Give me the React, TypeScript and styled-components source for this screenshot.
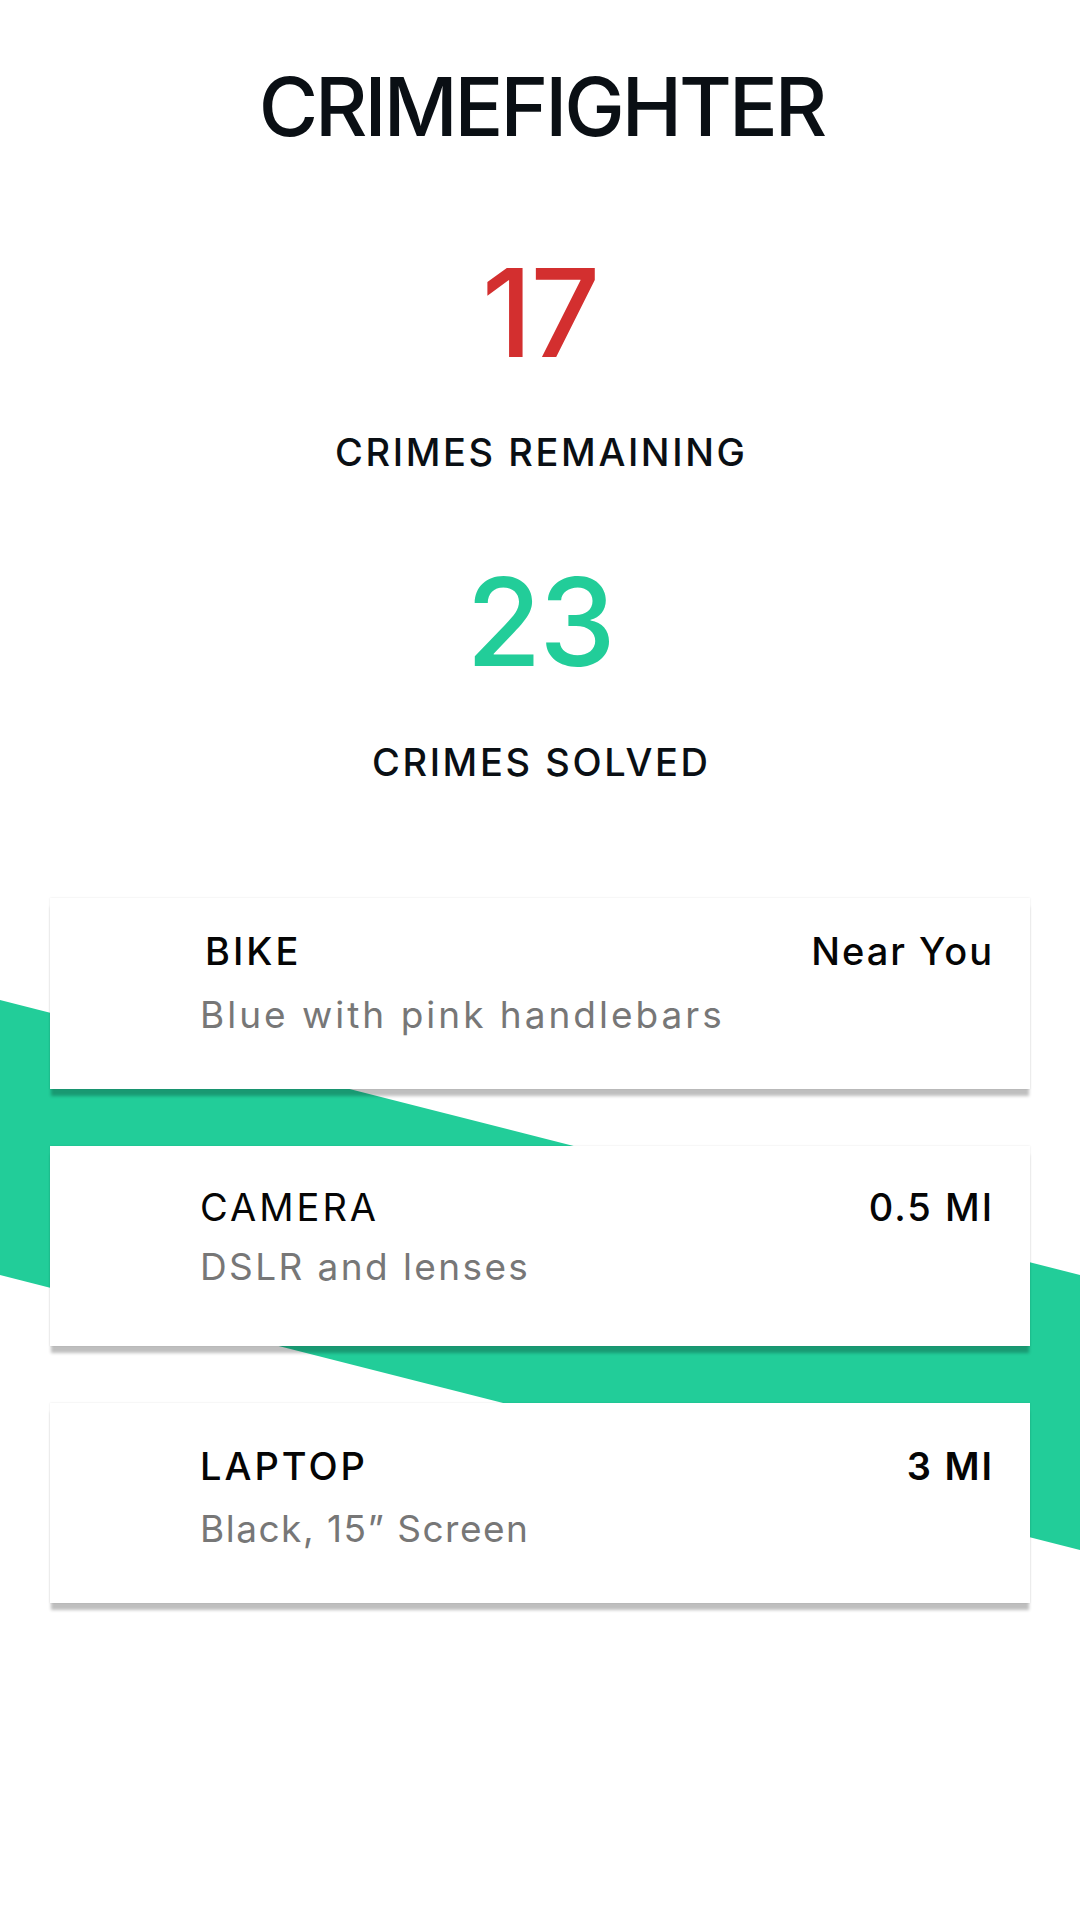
import React from "react";
import styled, { createGlobalStyle } from "styled-components";

const GlobalStyle = createGlobalStyle`
  html, body {
    margin: 0;
    padding: 0;
    background: #ffffff;
  }
  body {
    font-family: "Inter", "Noto Sans", "Liberation Sans", sans-serif;
    -webkit-font-smoothing: antialiased;
  }
`;

const Page = styled.main`
  width: 1080px;
  min-height: 1920px;
  display: flex;
  flex-direction: column;
  align-items: center;
  background: #ffffff;
  overflow: hidden;
`;

const Title = styled.h1`
  margin: 67px -3px 0 0;
  font-size: 81px;
  line-height: 1;
  font-weight: 500;
  letter-spacing: -3px;
  color: #0a0f14;
`;

const StatBlock = styled.section`
  display: flex;
  flex-direction: column;
  align-items: center;
  margin-top: ${(p: { $top: number }) => p.$top}px;
`;

const StatNumber = styled.div<{ $color: string }>`
  font-size: 122px;
  line-height: 1;
  font-weight: 500;
  letter-spacing: -2px;
  color: ${(p) => p.$color};
`;

const StatLabel = styled.div`
  margin-top: ${(p: { $gap: number }) => p.$gap}px;
  margin-right: -2.6px;
  font-size: 38px;
  line-height: 1;
  font-weight: 500;
  letter-spacing: 2.6px;
  color: #0a0f14;
`;

const ListArea = styled.section`
  position: relative;
  width: 1080px;
  margin-top: 117px;
  display: flex;
  flex-direction: column;
  align-items: center;
  gap: 57px;
`;

const Stripe = styled.svg`
  position: absolute;
  left: 0;
  top: 102px;
  width: 1080px;
  height: 560px;
  z-index: 0;
`;

const Card = styled.article<{ $height: number; $pad: number; $gap: number }>`
  position: relative;
  z-index: 1;
  box-sizing: border-box;
  width: 980px;
  height: ${(p) => p.$height}px;
  padding: ${(p) => p.$pad}px 38px 0 150px;
  background: #ffffff;
  display: flex;
  flex-direction: column;
  gap: ${(p) => p.$gap}px;
  box-shadow: 0 8px 3px -1px rgba(0, 0, 0, 0.25), 0 0 2px rgba(0, 0, 0, 0.1);
`;

const CardRow = styled.div`
  display: flex;
  justify-content: space-between;
  align-items: baseline;
`;

const ItemName = styled.span<{ $weight: number; $indent?: number }>`
  font-size: 38px;
  line-height: 1;
  font-weight: ${(p) => p.$weight};
  letter-spacing: 3px;
  color: #050505;
  padding-left: ${(p) => p.$indent ?? 0}px;
`;

const Distance = styled.span<{ $weight: number }>`
  font-size: 38px;
  line-height: 1;
  font-weight: ${(p) => p.$weight};
  letter-spacing: 2px;
  margin-right: -2px;
  color: #050505;
`;

const Description = styled.span<{ $spacing: number }>`
  font-size: 37px;
  line-height: 1;
  font-weight: 400;
  letter-spacing: ${(p) => p.$spacing}px;
  color: #777777;
`;

type Item = {
  name: string;
  distance: string;
  description: string;
  height: number;
  pad: number;
  gap: number;
  nameWeight: number;
  distWeight: number;
  descSpacing: number;
  indent?: number;
};

const items: Item[] = [
  {
    name: "BIKE",
    distance: "Near You",
    description: "Blue with pink handlebars",
    height: 191,
    pad: 34,
    gap: 26,
    nameWeight: 500,
    distWeight: 500,
    descSpacing: 3,
    indent: 5,
  },
  {
    name: "CAMERA",
    distance: "0.5 MI",
    description: "DSLR and lenses",
    height: 200,
    pad: 42,
    gap: 22,
    nameWeight: 400,
    distWeight: 500,
    descSpacing: 2.4,
  },
  {
    name: "LAPTOP",
    distance: "3 MI",
    description: "Black, 15\u201D Screen",
    height: 200,
    pad: 44,
    gap: 25,
    nameWeight: 500,
    distWeight: 600,
    descSpacing: 1.5,
  },
];

export default function App() {
  return (
    <>
      <GlobalStyle />
      <Page>
        <Title>CRIMEFIGHTER</Title>
        <StatBlock $top={104}>
          <StatNumber $color="#d32f2f">17</StatNumber>
          <StatLabel $gap={59}>CRIMES REMAINING</StatLabel>
        </StatBlock>
        <StatBlock $top={90}>
          <StatNumber $color="#22cd99">23</StatNumber>
          <StatLabel $gap={60}>CRIMES SOLVED</StatLabel>
        </StatBlock>
        <ListArea>
          <Stripe viewBox="0 0 1080 560" aria-hidden="true">
            <polygon points="0,0 1080,275 1080,550 0,275" fill="#22cd99" />
          </Stripe>
          {items.map((it) => (
            <Card key={it.name} $height={it.height} $pad={it.pad} $gap={it.gap}>
              <CardRow>
                <ItemName $weight={it.nameWeight} $indent={it.indent}>
                  {it.name}
                </ItemName>
                <Distance $weight={it.distWeight}>{it.distance}</Distance>
              </CardRow>
              <Description $spacing={it.descSpacing}>{it.description}</Description>
            </Card>
          ))}
        </ListArea>
      </Page>
    </>
  );
}
